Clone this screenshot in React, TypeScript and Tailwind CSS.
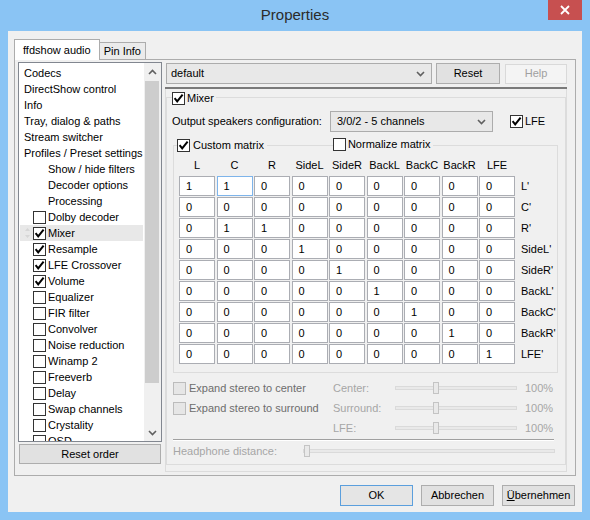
import React from 'react';

const CheckMark = () => (
  <svg width="11" height="11" viewBox="0 0 11 11">
    <path d="M1.6 5.2 L4.2 8.4 L9.6 1.6" fill="none" stroke="#000" strokeWidth="2" />
  </svg>
);

function Box({ checked = false, disabled = false }: { checked?: boolean; disabled?: boolean }) {
  return (
    <span
      className={
        disabled
          ? 'w-[13px] h-[13px] shrink-0 border border-[#bcbcbc] bg-[#e6e6e6]'
          : 'w-[13px] h-[13px] shrink-0 border border-[#333333] bg-white flex items-center justify-center'
      }
    >
      {checked ? <CheckMark /> : null}
    </span>
  );
}

const Chevron = ({ up = false, color = '#606060' }: { up?: boolean; color?: string }) => (
  <svg width="9" height="6" viewBox="0 0 9 6">
    <path d={up ? 'M1 5 L4.5 1.5 L8 5' : 'M1 1 L4.5 4.5 L8 1'} fill="none" stroke={color} strokeWidth="1.6" />
  </svg>
);

type Item = { t: string; k: 'top' | 'sub' | 'chk'; c?: boolean; sel?: boolean };
const items: Item[] = [
  { t: 'Codecs', k: 'top' },
  { t: 'DirectShow control', k: 'top' },
  { t: 'Info', k: 'top' },
  { t: 'Tray, dialog & paths', k: 'top' },
  { t: 'Stream switcher', k: 'top' },
  { t: 'Profiles / Preset settings', k: 'top' },
  { t: 'Show / hide filters', k: 'sub' },
  { t: 'Decoder options', k: 'sub' },
  { t: 'Processing', k: 'sub' },
  { t: 'Dolby decoder', k: 'chk' },
  { t: 'Mixer', k: 'chk', c: true, sel: true },
  { t: 'Resample', k: 'chk', c: true },
  { t: 'LFE Crossover', k: 'chk', c: true },
  { t: 'Volume', k: 'chk', c: true },
  { t: 'Equalizer', k: 'chk' },
  { t: 'FIR filter', k: 'chk' },
  { t: 'Convolver', k: 'chk' },
  { t: 'Noise reduction', k: 'chk' },
  { t: 'Winamp 2', k: 'chk' },
  { t: 'Freeverb', k: 'chk' },
  { t: 'Delay', k: 'chk' },
  { t: 'Swap channels', k: 'chk' },
  { t: 'Crystality', k: 'chk' },
  { t: 'OSD', k: 'chk' },
];

const matrix = [
  [1, 1, 0, 0, 0, 0, 0, 0, 0],
  [0, 0, 0, 0, 0, 0, 0, 0, 0],
  [0, 1, 1, 0, 0, 0, 0, 0, 0],
  [0, 0, 0, 1, 0, 0, 0, 0, 0],
  [0, 0, 0, 0, 1, 0, 0, 0, 0],
  [0, 0, 0, 0, 0, 1, 0, 0, 0],
  [0, 0, 0, 0, 0, 0, 1, 0, 0],
  [0, 0, 0, 0, 0, 0, 0, 1, 0],
  [0, 0, 0, 0, 0, 0, 0, 0, 1],
];
const cols = ['L', 'C', 'R', 'SideL', 'SideR', 'BackL', 'BackC', 'BackR', 'LFE'];
const rowLabels = ["L'", "C'", "R'", "SideL'", "SideR'", "BackL'", "BackC'", "BackR'", "LFE'"];

function Slider({ width, thumb }: { width: number; thumb: number }) {
  return (
    <div className="relative h-[12px] flex items-center" style={{ width }}>
      <div className="w-full h-[4px] border border-[#dadada] bg-[#e9e9e9]" />
      <div
        className="absolute top-0 w-[6px] h-[12px] border border-[#c4c4c4] bg-[#e9e9e9]"
        style={{ left: thumb }}
      />
    </div>
  );
}

function Button({ children, w, disabled = false, def = false }: { children: React.ReactNode; w: string; disabled?: boolean; def?: boolean }) {
  return (
    <div
      className={
        disabled
          ? `${w} h-[20px] border border-[#d9d9d9] bg-[#f4f4f4] text-[#a0a0a0] flex items-center justify-center`
          : def
          ? `${w} h-[21px] border border-[#5b9fdd] bg-[#e5e5e5] flex items-center justify-center`
          : `${w} h-[21px] border border-[#adadad] bg-[#e1e1e1] flex items-center justify-center`
      }
    >
      {children}
    </div>
  );
}

export default function App() {
  return (
    <div className="w-[590px] h-[520px] bg-[#8ac4f4] flex flex-col font-['Liberation_Sans',Arial,sans-serif] text-[11px] text-black leading-none select-none">
      {/* title bar */}
      <div className="relative h-[31px] flex items-center justify-center">
        <span className="text-[15px] text-[#2b2b2b] -mt-[2px]">Properties</span>
        <div className="absolute top-0 right-[8px] w-[34px] h-[20px] bg-[#c75050] flex items-center justify-center">
          <svg width="10" height="10" viewBox="0 0 10 10">
            <path d="M1 1 L9 9 M9 1 L1 9" stroke="#fff" strokeWidth="1.8" />
          </svg>
        </div>
      </div>

      {/* client */}
      <div className="mx-[8px] h-[481px] bg-[#f0f0f0] flex flex-col">
        {/* tabs */}
        <div className="pl-[6px] pt-[7px] flex items-end h-[28px]">
          <div className="relative z-10 h-[21px] px-[8px] border border-b-0 border-[#acacac] bg-white flex items-center -mb-[1px]">
            ffdshow audio
          </div>
          <div className="h-[17px] px-[4px] border border-b-0 border-l-0 border-[#acacac] bg-[#ebebeb] flex items-center">
            Pin Info
          </div>
        </div>

        {/* panel */}
        <div className="ml-[6px] w-[562px] h-[417px] border border-[#acacac] flex pl-[3px] pt-[1px]">
          {/* left column */}
          <div className="w-[144px] flex flex-col pt-[1px]">
            <div className="h-[380px] border border-[#828790] bg-white flex overflow-hidden">
              <div className="flex-1 pt-[2px] overflow-hidden">
                {items.map((it) => (
                  <div
                    key={it.t}
                    className={
                      it.sel
                        ? 'relative mx-[1px] h-[16px] flex items-center bg-[#e8e8e8] whitespace-nowrap'
                        : 'relative mx-[1px] h-[16px] flex items-center whitespace-nowrap'
                    }
                  >
                    {it.k === 'top' && <span className="pl-[4px]">{it.t}</span>}
                    {it.k === 'sub' && <span className="pl-[28px]">{it.t}</span>}
                    {it.k === 'chk' && (
                      <span className="pl-[13px] flex items-center gap-[2px]">
                        <Box checked={it.c} />
                        <span>{it.t}</span>
                      </span>
                    )}
                    {it.sel && (
                      <svg className="absolute left-[5px] top-[2px]" width="5" height="12" viewBox="0 0 5 12">
                        <path d="M0 4 L2.5 1 L5 4 Z M0 8 L2.5 11 L5 8 Z" fill="#d6d6d6" />
                      </svg>
                    )}
                  </div>
                ))}
              </div>
              {/* scrollbar */}
              <div className="w-[17px] bg-[#f0f0f0] flex flex-col">
                <div className="h-[17px] flex items-center justify-center">
                  <Chevron up />
                </div>
                <div className="ml-[1px] mr-[2px] mt-[1px] h-[302px] bg-[#cdcdcd]" />
                <div className="flex-1" />
                <div className="h-[17px] flex items-center justify-center">
                  <Chevron />
                </div>
              </div>
            </div>
            <div className="ml-[1px] mt-[2px] w-[142px] h-[20px] border border-[#adadad] bg-[#e1e1e1] flex items-center justify-center">
              Reset order
            </div>
          </div>

          {/* right column */}
          <div className="ml-[3px] w-[402px] flex flex-col pt-[2px]">
            <div className="ml-[1px] flex items-center h-[21px]">
              <div className="w-[266px] h-[21px] border border-[#acacac] bg-[#e8e8e8] flex items-center justify-between pl-[4px] pr-[6px]">
                <span>default</span>
                <Chevron />
              </div>
              <div className="ml-[4px]">
                <Button w="w-[64px]">Reset</Button>
              </div>
              <div className="ml-[5px]">
                <Button w="w-[62px]" disabled>
                  Help
                </Button>
              </div>
            </div>
            <div className="mt-[3px] w-[402px] h-[2px] bg-[#7a7a7a]" />

            {/* page frame */}
            <div className="w-[402px] h-[383px] border border-t-0 border-[#dcdcdc] pt-[8px]">
              {/* Mixer group */}
              <div className="w-[400px] h-[368px] border border-[#dcdcdc] flex flex-col">
                <div className="-mt-[6px] ml-[5px] flex items-center gap-[2px] h-[13px]">
                  <span className="bg-[#f0f0f0] flex items-center gap-[2px] pr-[2px]">
                    <Box checked />
                    <span>Mixer</span>
                  </span>
                </div>
                <div className="mt-[6px] ml-[5px] flex items-center h-[21px]">
                  <span className="w-[158px]">Output speakers configuration:</span>
                  <div className="w-[163px] h-[21px] border border-[#acacac] bg-[#e8e8e8] flex items-center justify-between pl-[6px] pr-[6px]">
                    <span>3/0/2 - 5 channels</span>
                    <Chevron />
                  </div>
                  <span className="ml-[17px] flex items-center gap-[2px]">
                    <Box checked />
                    <span>LFE</span>
                  </span>
                </div>

                {/* Custom matrix group */}
                <div className="mt-[13px] ml-[6px] w-[385px] h-[228px] border border-[#dcdcdc] flex flex-col">
                  <div className="-mt-[7px] ml-[3px] flex items-center h-[13px]">
                    <span className="bg-[#f0f0f0] flex items-center gap-[3px] pr-[3px]">
                      <Box checked />
                      <span>Custom matrix</span>
                    </span>
                    <span className="ml-[66px] -mt-[3px] bg-[#f0f0f0] flex items-center gap-[2px] pr-[3px]">
                      <Box />
                      <span>Normalize matrix</span>
                    </span>
                  </div>
                  <div className="ml-[5px] mt-[5px] grid grid-cols-[repeat(9,36px)] gap-x-[1.5px] h-[16px] items-center">
                    {cols.map((c) => (
                      <span key={c} className="text-center">
                        {c}
                      </span>
                    ))}
                  </div>
                  <div className="ml-[5px] mt-[3px] flex flex-col gap-[1px]">
                    {matrix.map((row, r) => (
                      <div key={r} className="flex items-center h-[20px]">
                        <div className="grid grid-cols-[repeat(9,36px)] gap-x-[1.5px]">
                          {row.map((v, c) => (
                            <div
                              key={c}
                              className={
                                r === 0 && c === 1
                                  ? 'h-[20px] border border-[#7eb4ea] bg-white flex items-center pl-[6px]'
                                  : 'h-[20px] border border-[#abadb3] bg-white flex items-center pl-[6px]'
                              }
                            >
                              {v}
                            </div>
                          ))}
                        </div>
                        <span className="ml-[6px] whitespace-nowrap">{rowLabels[r]}</span>
                      </div>
                    ))}
                  </div>
                </div>

                {/* expand area */}
                <div className="mt-[5px] ml-[6px] grid grid-cols-[160px_62px_122px_30px] gap-x-0 auto-rows-[20px] items-center">
                  <span className="flex items-center gap-[3px] text-[#6d6d6d]">
                    <Box disabled />
                    <span>Expand stereo to center</span>
                  </span>
                  <span className="text-[#a6a6a6]">Center:</span>
                  <Slider width={122} thumb={38} />
                  <span className="text-[#a6a6a6] pl-[8px]">100%</span>

                  <span className="flex items-center gap-[3px] text-[#6d6d6d]">
                    <Box disabled />
                    <span>Expand stereo to surround</span>
                  </span>
                  <span className="text-[#a6a6a6]">Surround:</span>
                  <Slider width={122} thumb={38} />
                  <span className="text-[#a6a6a6] pl-[8px]">100%</span>

                  <span />
                  <span className="text-[#a6a6a6]">LFE:</span>
                  <Slider width={122} thumb={38} />
                  <span className="text-[#a6a6a6] pl-[8px]">100%</span>
                </div>
                <div className="mt-[1px] ml-[6px] w-[381px] h-[2px] border-t border-[#a0a0a0] border-b border-b-white" />
                <div className="ml-[6px] h-[20px] flex items-center">
                  <span className="w-[130px] text-[#a6a6a6]">Headphone distance:</span>
                  <Slider width={252} thumb={1} />
                </div>
              </div>
            </div>
          </div>
        </div>

        {/* buttons */}
        <div className="mt-[9px] flex justify-end pr-[7px] gap-[8px]">
          <Button w="w-[73px]" def>
            OK
          </Button>
          <Button w="w-[73px]">Abbrechen</Button>
          <Button w="w-[73px]">
            <span>
              <span className="underline">Ü</span>bernehmen
            </span>
          </Button>
        </div>
      </div>
    </div>
  );
}
